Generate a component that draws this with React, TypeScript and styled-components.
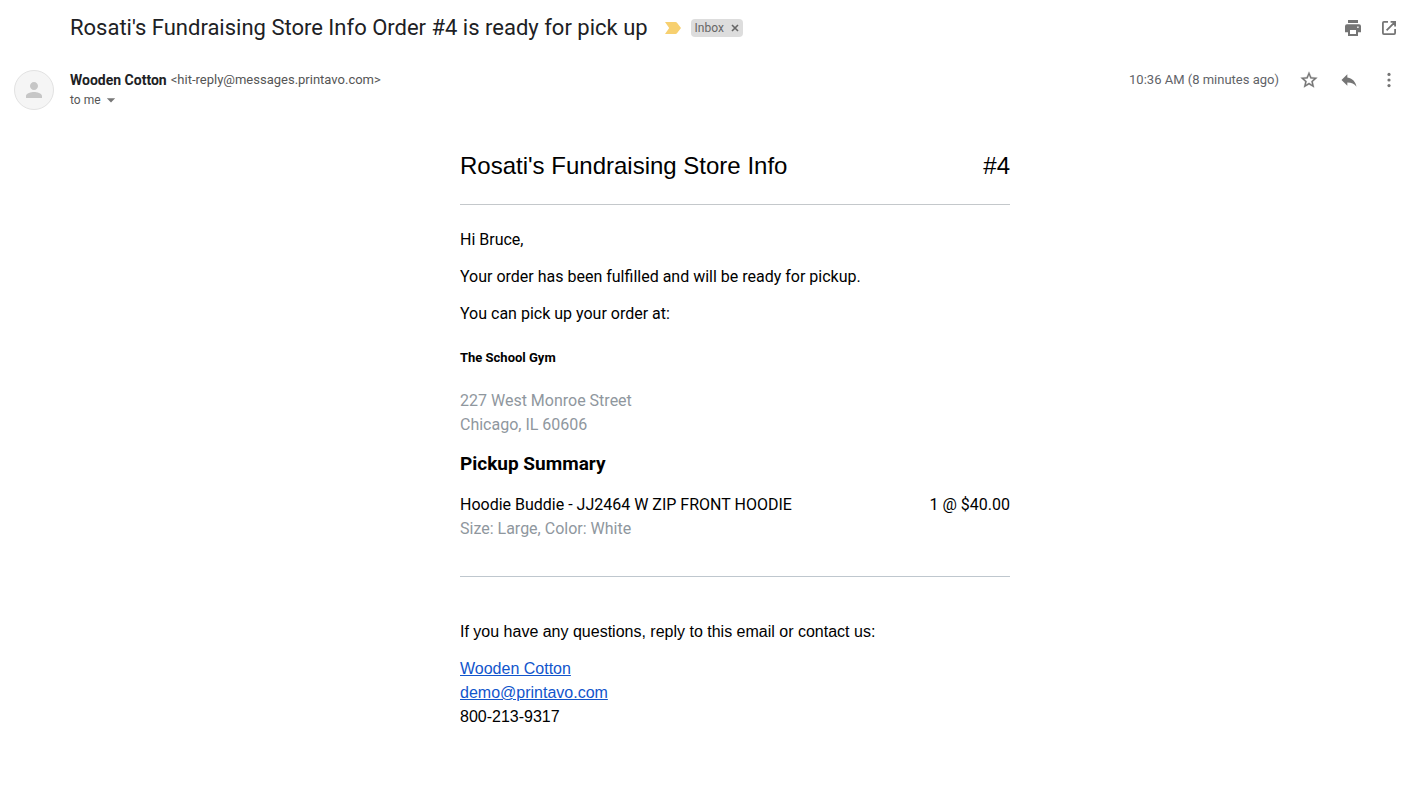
import React from "react";
import styled, { createGlobalStyle } from "styled-components";
import { MdArrowDropDown, MdPerson, MdReply } from "react-icons/md";

const GlobalStyle = createGlobalStyle`
  *, *::before, *::after { box-sizing: border-box; }
  body {
    margin: 0;
    background: #fff;
    color: #000;
    font-family: Roboto, "Liberation Sans", sans-serif;
    font-size: 16px;
    line-height: 24px;
  }
  h1, h2, h3, p, address { margin: 0; }
  button { font: inherit; color: inherit; border: 0; padding: 0; background: none; cursor: pointer; }
`;

const Page = styled.main`
  padding-bottom: 62px;
`;

const SubjectBar = styled.header`
  display: flex;
  align-items: center;
  height: 56px;
  padding: 0 9px 0 70px;
`;

const Subject = styled.h1`
  margin-right: 17px;
  color: #202124;
  font-size: 22px;
  font-weight: 400;
  line-height: 28px;
  white-space: nowrap;
`;

const MarkerButton = styled.button`
  display: flex;
  margin-right: 10px;
`;

const Chip = styled.span`
  display: flex;
  align-items: center;
  height: 18px;
  padding: 0 4px;
  gap: 7px;
  border-radius: 4px;
  background: #ddd;
  color: #666;
  font-size: 12px;
  line-height: 16px;
`;

const Actions = styled.div<{ $gap: number }>`
  display: flex;
  align-items: center;
  gap: ${({ $gap }) => $gap}px;
  margin-left: auto;
  color: #757575;
`;

const IconButton = styled.button`
  display: flex;
  align-items: center;
  justify-content: center;
`;

const SenderBar = styled.section`
  display: flex;
  align-items: flex-start;
  padding: 14px 9px 0 14px;
`;

const Avatar = styled.div`
  display: flex;
  align-items: center;
  justify-content: center;
  flex: none;
  width: 40px;
  height: 40px;
  margin-right: 16px;
  border: 1px solid #e2e2e2;
  border-radius: 50%;
  background: #f5f5f5;
  color: #c6c6c6;
`;

const SenderText = styled.div`
  color: #555;
  font-size: 12px;
  line-height: 20px;
`;

const SenderLine = styled.div`
  display: flex;
  align-items: center;
  gap: 4px;
  height: 20px;
  font-size: 13px;
`;

const SenderName = styled.strong`
  color: #202124;
  font-size: 14px;
  font-weight: 700;
`;

const RecipientButton = styled.button`
  display: flex;
  align-items: center;

  svg { color: #777; }
`;

const Timestamp = styled.time`
  color: #5f6368;
  font-size: 13px;
  line-height: 20px;
`;

const Message = styled.article`
  max-width: 550px;
  margin: 40px auto 0;
`;

const MessageArea = styled.div`
  padding: 0 8px 0 70px;
`;

const StoreHeader = styled.div`
  display: flex;
  justify-content: space-between;
  padding-bottom: 22px;
  border-bottom: 1px solid #c4c8cb;
  font-family: "Liberation Sans", Arial, sans-serif;
`;

const StoreTitle = styled.h2`
  font-size: 24px;
  font-weight: 400;
  line-height: 32px;
`;

const OrderNumber = styled.span`
  font-size: 24px;
  line-height: 32px;
`;

const Paragraphs = styled.div`
  display: flex;
  flex-direction: column;
  gap: 13px;
  padding-top: 23px;
`;

const PlaceName = styled.h3`
  margin: 20px 0 19px;
  font-size: 13px;
  font-weight: 700;
  line-height: 24px;
`;

const Address = styled.address`
  color: #8f979e;
  font-style: normal;
`;

const SummaryTitle = styled.h2`
  margin: 15px 0 17px;
  font-size: 19px;
  font-weight: 700;
  line-height: 24px;
`;

const ItemTable = styled.table`
  width: 100%;
  border-collapse: collapse;

  td { padding: 0; vertical-align: top; }
  td:last-child { text-align: right; }
`;

const ItemOptions = styled.div`
  color: #8f979e;
`;

const Contact = styled.footer`
  display: flex;
  flex-direction: column;
  gap: 13px;
  margin-top: 35px;
  padding-top: 43px;
  border-top: 1px solid #bfc7ce;
  font-family: "Liberation Sans", Arial, sans-serif;
`;

const ContactLines = styled.address`
  display: flex;
  flex-direction: column;
  align-items: flex-start;
  font-style: normal;
`;

const Link = styled.a`
  color: #15c;
  text-decoration: underline;
`;

const PrintIcon = () => (
  <svg width="20" height="20" viewBox="0 0 20 20" fill="currentColor">
    <path d="M5 2H15V5H5Z" />
    <path
      fillRule="evenodd"
      d="M4 6.3H16A2 2 0 0 1 18 8.3V14.3H15V18H5V14.3H2V8.3A2 2 0 0 1 4 6.3ZM7 12V16H13V12ZM14.2 8.6V10H15.6V8.6Z"
    />
  </svg>
);

const OpenIcon = () => (
  <svg width="20" height="20" viewBox="0 0 20 20" fill="none" stroke="currentColor" strokeWidth="1.8">
    <path d="M9 3.9H4.9A1 1 0 0 0 3.9 4.9V15.1A1 1 0 0 0 4.9 16.1H15.1A1 1 0 0 0 16.1 15.1V11M11.6 3.9H16.1V8.4M16.1 3.9L7.6 12.4" />
  </svg>
);

const StarIcon = () => (
  <svg width="20" height="20" viewBox="0 0 24 24" fill="currentColor" stroke="currentColor" strokeWidth="0.3">
    <path d="M22 9.24l-7.19-.62L12 2 9.19 8.63 2 9.24l5.46 4.73L5.82 21 12 17.27 18.18 21l-1.63-7.03L22 9.24zM12 15.4l-3.76 2.27 1-4.28-3.32-2.88 4.38-.38L12 6.1l1.71 4.04 4.38.38-3.32 2.88 1 4.28L12 15.4z" />
  </svg>
);

const MoreIcon = () => (
  <svg width="20" height="20" viewBox="0 0 20 20" fill="currentColor">
    <circle cx="10" cy="4.4" r="1.6" />
    <circle cx="10" cy="10" r="1.6" />
    <circle cx="10" cy="15.6" r="1.6" />
  </svg>
);

export default function App() {
  return (
    <>
      <GlobalStyle />
      <Page>
        <SubjectBar>
          <Subject>Rosati's Fundraising Store Info Order #4 is ready for pick up</Subject>
          <MarkerButton aria-label="Important">
            <svg width="16" height="12" viewBox="0 0 16 12" fill="#f7d070">
              <path d="M0 0H10.4C11.2 0 11.8.3 12.2.9L16 6L12.2 11.1C11.8 11.7 11.2 12 10.4 12H0L4.2 6Z" />
            </svg>
          </MarkerButton>
          <Chip>
            Inbox
            <IconButton aria-label="Remove label Inbox">
              <svg width="8" height="8" viewBox="0 0 8 8" fill="none" stroke="currentColor" strokeWidth="1.6">
                <path d="M1 1L7 7M7 1L1 7" />
              </svg>
            </IconButton>
          </Chip>
          <Actions $gap={16}>
            <IconButton aria-label="Print"><PrintIcon /></IconButton>
            <IconButton aria-label="Open in new window"><OpenIcon /></IconButton>
          </Actions>
        </SubjectBar>

        <SenderBar>
          <Avatar><MdPerson size={24} /></Avatar>
          <SenderText>
            <SenderLine>
              <SenderName>Wooden Cotton</SenderName>
              <span>&lt;hit-reply@messages.printavo.com&gt;</span>
            </SenderLine>
            <RecipientButton>
              to me
              <MdArrowDropDown size={20} />
            </RecipientButton>
          </SenderText>
          <Actions $gap={20}>
            <Timestamp>10:36 AM (8 minutes ago)</Timestamp>
            <IconButton aria-label="Star"><StarIcon /></IconButton>
            <IconButton aria-label="Reply"><MdReply size={20} /></IconButton>
            <IconButton aria-label="More"><MoreIcon /></IconButton>
          </Actions>
        </SenderBar>

        <MessageArea>
          <Message>
            <StoreHeader>
              <StoreTitle>Rosati's Fundraising Store Info</StoreTitle>
              <OrderNumber>#4</OrderNumber>
            </StoreHeader>

            <Paragraphs>
              <p>Hi Bruce,</p>
              <p>Your order has been fulfilled and will be ready for pickup.</p>
              <p>You can pick up your order at:</p>
            </Paragraphs>

            <PlaceName>The School Gym</PlaceName>
            <Address>
              227 West Monroe Street
              <br />
              Chicago, IL 60606
            </Address>

            <SummaryTitle>Pickup Summary</SummaryTitle>
            <ItemTable>
              <tbody>
                <tr>
                  <td>
                    Hoodie Buddie - JJ2464 W ZIP FRONT HOODIE
                    <ItemOptions>Size: Large, Color: White</ItemOptions>
                  </td>
                  <td>1 @ $40.00</td>
                </tr>
              </tbody>
            </ItemTable>

            <Contact>
              <p>If you have any questions, reply to this email or contact us:</p>
              <ContactLines>
                <Link href="#wooden-cotton">Wooden Cotton</Link>
                <Link href="mailto:demo@printavo.com">demo@printavo.com</Link>
                <span>800-213-9317</span>
              </ContactLines>
            </Contact>
          </Message>
        </MessageArea>
      </Page>
    </>
  );
}
